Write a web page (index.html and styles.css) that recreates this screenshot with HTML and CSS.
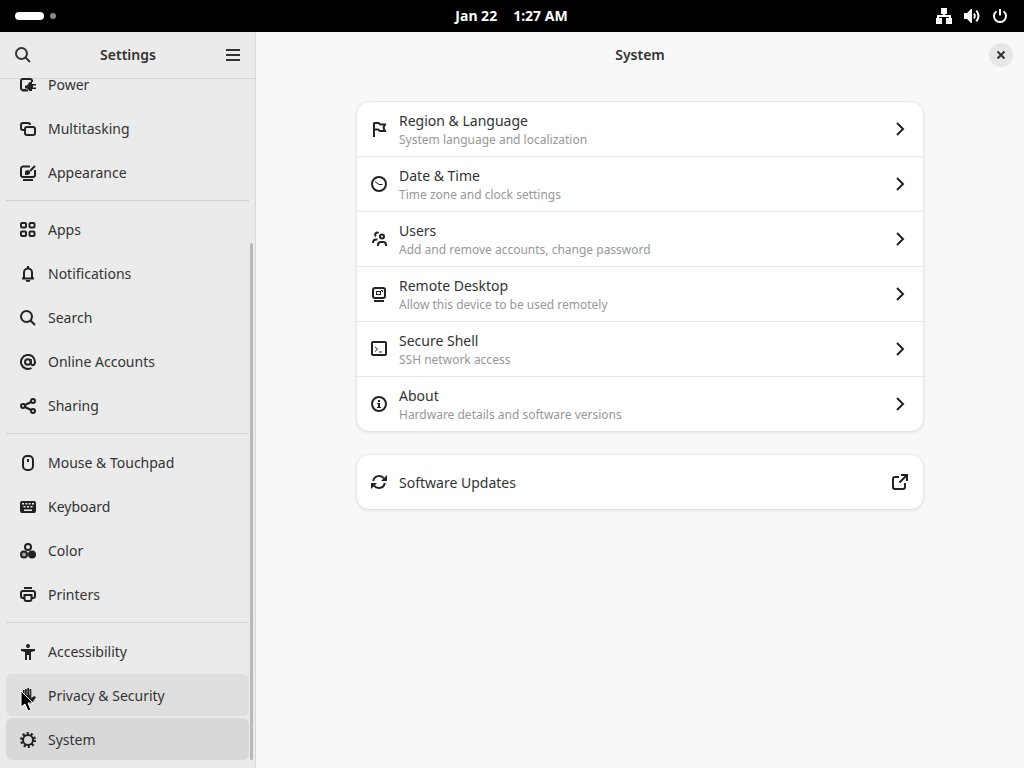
FILE: index.html
```
<!DOCTYPE html>
<html lang="en">
  <head>
    <meta charset="UTF-8" />
    <meta name="viewport" content="width=device-width, initial-scale=1.0" />
    <title>Settings</title>
    <link rel="stylesheet" href="styles.css">
  </head>

  <body>
    <!-- Top bar -->
    <header class="topbar">
      <button class="workspaces" aria-label="Activities"><span class="pill"></span><span class="dot"></span></button>
      <button class="clock"><span>Jan 22</span><span>1:27 AM</span></button>
      <button class="status" aria-label="System menu">
        <svg class="icon" viewBox="0 0 16 16"><path d="M5 0h6v6H9v1h6v3h1v6h-6v-6h3V9H3v1h3v6H0v-6h1V7h6V6H5z"/></svg>
        <svg class="icon" viewBox="0 0 16 16"><path d="M0 5h3l4-4h1v14H7l-4-4H0z"/><g class="line"><path d="M10 5.500q1.600 2.500 0 5M12.300 2.500q4.400 5.500 0 11"/></g></svg>
        <svg class="icon" viewBox="0 0 16 16"><g class="line"><path d="M4.500 3.200a6 6 0 1 0 7 0M8 1v6.500"/></g></svg>
      </button>
    </header>

    <div class="window">
      <!-- Sidebar -->
      <aside class="sidebar">
        <div class="titlebar">
          <button class="flat" aria-label="Search">
            <svg class="icon" viewBox="0 0 16 16"><g class="line"><circle cx="6.500" cy="6.500" r="5.500"/><path d="M10.500 10.500l4.500 4.500"/></g></svg>
          </button>
          <h2>Settings</h2>
          <button class="flat" aria-label="Main menu">
            <svg class="icon" viewBox="0 0 16 16"><path d="M1 2h14v2H1zM1 7h14v2H1zM1 12h14v2H1z"/></svg>
          </button>
        </div>

        <nav class="panels">
          <a href="#power">
            <svg class="icon" viewBox="0 0 16 16"><g class="line"><path d="M6 13H3a2 2 0 0 1-2-2V4a2 2 0 0 1 2-2h7a2 2 0 0 1 2 2v1M2 13.500h6"/></g><path d="M12 5v2h4v1.500h-3v2h3V12h-4v2H9.500L7 11.500H5v-3h2L9.500 5z"/></svg>
            Power
          </a>
          <a href="#multitasking">
            <svg class="icon" viewBox="0 0 16 16"><g class="line"><path d="M4 9H3a2 2 0 0 1-2-2V4a2 2 0 0 1 2-2h5a2 2 0 0 1 2 2"/><rect x="5" y="6" width="10" height="8" rx="2"/></g></svg>
            Multitasking
          </a>
          <a href="#appearance">
            <svg class="icon" viewBox="0 0 16 16"><g class="line"><path d="M10 1.500H3a2 2 0 0 0-2 2V10a2 2 0 0 0 2 2h10a2 2 0 0 0 2-2V5M10 6l5-5"/></g><path d="M5 9.500V7a2.500 2.500 0 0 1 4-1.500l1 1A3 3 0 0 1 7.500 10H5zM3 14h10v2H3z"/></svg>
            Appearance
          </a>
          <hr>
          <a href="#apps">
            <svg class="icon" viewBox="0 0 16 16"><g class="line"><rect x="1" y="1" width="5" height="4.500" rx="1"/><rect x="9.500" y="1" width="5" height="4.500" rx="1"/><rect x="1" y="9.500" width="5" height="4.500" rx="1"/><rect x="9.500" y="9.500" width="5" height="4.500" rx="1"/></g></svg>
            Apps
          </a>
          <a href="#notifications">
            <svg class="icon" viewBox="0 0 16 16"><g class="line"><path d="M4 12V6.500a4 4 0 0 1 8 0V12M2 12.500h12"/></g><path d="M7 0h2v3H7zM5.500 14h5a2.500 2 0 0 1-5 0z"/></svg>
            Notifications
          </a>
          <a href="#search">
            <svg class="icon" viewBox="0 0 16 16"><g class="line"><circle cx="6.500" cy="6.500" r="5.500"/><path d="M10.500 10.500l4.500 4.500"/></g></svg>
            Search
          </a>
          <a href="#accounts">
            <svg class="icon" viewBox="0 0 16 16"><g class="line"><circle cx="7.800" cy="8" r="2.800"/><path d="M10.800 5v4.500q.4 1.700 2 1.700Q15 10.800 15 8a7 7 0 1 0-3.500 6"/></g></svg>
            Online Accounts
          </a>
          <a href="#sharing">
            <svg class="icon" viewBox="0 0 16 16"><g class="line"><circle cx="3" cy="8" r="2"/><circle cx="13" cy="3" r="2"/><circle cx="13" cy="13" r="2"/><path d="M5 7l6-3M5 9l6 3"/></g></svg>
            Sharing
          </a>
          <hr>
          <a href="#mouse">
            <svg class="icon" viewBox="0 0 16 16"><g class="line"><rect x="3" y="1" width="10" height="14" rx="4"/><path d="M8 4v3"/></g></svg>
            Mouse &amp; Touchpad
          </a>
          <a href="#keyboard">
            <svg class="icon" viewBox="0 0 16 16"><path fill-rule="evenodd" d="M2 2h12a2 2 0 0 1 2 2v8a2 2 0 0 1-2 2H2a2 2 0 0 1-2-2V4a2 2 0 0 1 2-2zm0 2v1.500h2V4zm3.300 0v1.500h2V4zm3.300 0v1.500h2V4zM12 4v1.500h2V4zM3.500 7v1.500h2V7zM7 7v1.500h2V7zm3.500 0v1.500h2V7zM4 10.500V12h8v-1.500z"/></svg>
            Keyboard
          </a>
          <a href="#color">
            <svg class="icon" viewBox="0 0 16 16"><g class="line"><circle cx="8" cy="4" r="3"/><circle class="tint" cx="4" cy="11.500" r="3"/></g><circle cx="12" cy="11.500" r="4"/></svg>
            Color
          </a>
          <a href="#printers">
            <svg class="icon" viewBox="0 0 16 16"><path d="M4 0h8v2H4z"/><g class="line"><path d="M4 11H3a2 2 0 0 1-2-2V6a2 2 0 0 1 2-2h10a2 2 0 0 1 2 2v3a2 2 0 0 1-2 2h-1"/><path d="M4.500 8h7v4a2 2 0 0 1-2 2h-3a2 2 0 0 1-2-2z"/></g></svg>
            Printers
          </a>
          <hr>
          <a href="#accessibility">
            <svg class="icon" viewBox="0 0 16 16"><circle cx="8" cy="2" r="2"/><path d="M1 5h14v2l-4 1v8H9v-5H7v5H5V8L1 7z"/></svg>
            Accessibility
          </a>
          <a href="#privacy" class="hovered">
            <svg class="icon" viewBox="0 0 16 16"><path d="M3 2h1.500v6H5V1h1.700v6h.6V0H9v7h.6V1h1.700v9l3-2 1.700 1.200L12 15l-3 1H6l-3-2-1-4z"/></svg>
            Privacy &amp; Security
          </a>
          <a href="#system" class="selected" aria-current="page">
            <svg class="icon" viewBox="0 0 16 16"><g class="line"><circle cx="8" cy="8" r="5"/><circle class="teeth" cx="8" cy="8" r="6.500"/></g></svg>
            System
          </a>
        </nav>
        <div class="scrollbar"></div>
      </aside>

      <!-- System panel -->
      <main class="content">
        <div class="titlebar">
          <h1>System</h1>
          <button class="close" aria-label="Close">
            <svg class="icon" viewBox="0 0 16 16"><g class="line"><path d="M4.500 4.500l7 7M11.500 4.500l-7 7"/></g></svg>
          </button>
        </div>

        <div class="groups">
          <div class="card">
            <a class="row" href="#region">
              <svg class="icon" viewBox="0 0 16 16"><g class="line"><path d="M3 16V1.500M3 2h4q1 0 1.500.8T10 3.500h4l-1.500 3.300L14 10H9.500Q8.500 10 8 9.200T6.500 8.500H3"/></g></svg>
              <span class="text"><span class="name">Region &amp; Language</span><span class="hint">System language and localization</span></span>
              <svg class="icon" viewBox="0 0 16 16"><g class="line"><path d="M5 2l6 6-6 6"/></g></svg>
            </a>
            <a class="row" href="#datetime">
              <svg class="icon" viewBox="0 0 16 16"><g class="line"><circle cx="8" cy="8" r="7"/></g><g class="thin"><path d="M4 5.500L8 8.500h3.500"/></g></svg>
              <span class="text"><span class="name">Date &amp; Time</span><span class="hint">Time zone and clock settings</span></span>
              <svg class="icon" viewBox="0 0 16 16"><g class="line"><path d="M5 2l6 6-6 6"/></g></svg>
            </a>
            <a class="row" href="#users">
              <svg class="icon" viewBox="0 0 16 16"><g class="line"><circle cx="11" cy="5.500" r="2"/><path d="M7 15v-1a3 3 0 0 1 3-3h2a3 3 0 0 1 3 3v1M7.500 2A2 2 0 1 0 5 5.300M2 12v-1a3 3 0 0 1 3-2.500h1.500"/></g></svg>
              <span class="text"><span class="name">Users</span><span class="hint">Add and remove accounts, change password</span></span>
              <svg class="icon" viewBox="0 0 16 16"><g class="line"><path d="M5 2l6 6-6 6"/></g></svg>
            </a>
            <a class="row" href="#remote">
              <svg class="icon" viewBox="0 0 16 16"><g class="line"><rect x="2" y="2" width="12" height="10" rx="2"/><path d="M3 15h10"/></g><g class="thin"><rect x="5.500" y="5.500" width="4" height="3"/><path d="M10 4.500h1.500V6"/></g></svg>
              <span class="text"><span class="name">Remote Desktop</span><span class="hint">Allow this device to be used remotely</span></span>
              <svg class="icon" viewBox="0 0 16 16"><g class="line"><path d="M5 2l6 6-6 6"/></g></svg>
            </a>
            <a class="row" href="#ssh">
              <svg class="icon" viewBox="0 0 16 16"><g class="line"><rect x="1" y="1" width="14" height="13" rx="1"/></g><g class="thin"><path d="M4 6l2.500 2.200L4 10.500M8 11h3"/></g></svg>
              <span class="text"><span class="name">Secure Shell</span><span class="hint">SSH network access</span></span>
              <svg class="icon" viewBox="0 0 16 16"><g class="line"><path d="M5 2l6 6-6 6"/></g></svg>
            </a>
            <a class="row" href="#about">
              <svg class="icon" viewBox="0 0 16 16"><g class="line"><circle cx="8" cy="8" r="7"/></g><path d="M7 4h2v2H7zM6 7h3v4h1v1H6v-1h1V8H6z"/></svg>
              <span class="text"><span class="name">About</span><span class="hint">Hardware details and software versions</span></span>
              <svg class="icon" viewBox="0 0 16 16"><g class="line"><path d="M5 2l6 6-6 6"/></g></svg>
            </a>
          </div>

          <div class="card">
            <a class="row" href="#updates">
              <svg class="icon" viewBox="0 0 16 16"><g class="line"><path d="M2.200 7A6 6 0 0 1 13 4.500M13.800 9A6 6 0 0 1 3 11.500"/></g><path d="M16 1v6h-6zM0 15V9h6z"/></svg>
              <span class="text"><span class="name">Software Updates</span></span>
              <svg class="icon" viewBox="0 0 16 16"><g class="line"><path d="M7 3H3a2 2 0 0 0-2 2v8a2 2 0 0 0 2 2h8a2 2 0 0 0 2-2V9M7.500 8.500L14 2M9 1h6v6"/></g></svg>
            </a>
          </div>
        </div>
      </main>
    </div>

    <!-- Mouse pointer -->
    <svg class="pointer" viewBox="0 0 14 22"><path d="M1 1v16l4-3 3 7 3-1-3-7h5z"/></svg>
  </body>
</html>
```
FILE: styles.css
```
* {
  margin: 0;
  padding: 0;
  box-sizing: border-box;
}

body {
  height: 100vh;
  display: flex;
  flex-direction: column;
  overflow: hidden;
  font-family: "Noto Sans", sans-serif;
  font-size: 14px;
  line-height: 20px;
  color: #333;
  background-color: #f8f8f8;
}

a {
  color: inherit;
  text-decoration: none;
}

button {
  border: none;
  background: none;
  color: inherit;
  font: inherit;
}

/* Icons */
.icon {
  width: 16px;
  height: 16px;
  flex: none;
  fill: currentColor;
}

.panels .icon,
.row .icon {
  color: #222;
}

.line,
.thin {
  fill: none;
  stroke: currentColor;
  stroke-width: 2;
}

.thin {
  stroke-width: 1;
}

.tint {
  fill: #aaa;
}

.teeth {
  stroke-width: 3;
  stroke-dasharray: 2 2.08;
}

/* Top bar */
.topbar {
  height: 32px;
  flex: none;
  display: grid;
  grid-template-columns: 1fr auto 1fr;
  align-items: center;
  padding: 0 16px 0 15px;
  background-color: #000;
  color: #fff;
  font-weight: 700;
}

.workspaces {
  justify-self: start;
  display: flex;
  align-items: center;
  gap: 6px;
}

.pill {
  width: 29px;
  height: 8px;
  border-radius: 4px;
  background-color: #fff;
}

.dot {
  width: 6px;
  height: 6px;
  border-radius: 50%;
  background-color: #888;
}

.clock {
  display: flex;
  gap: 16px;
}

.status {
  justify-self: end;
  display: flex;
  gap: 12px;
}

/* Window */
.window {
  flex: 1;
  min-height: 0;
  display: flex;
}

.titlebar {
  height: 46px;
  flex: none;
  display: grid;
  grid-template-columns: 32px 1fr 32px;
  align-items: center;
  padding: 0 7px;
}

.titlebar h1,
.titlebar h2 {
  grid-column: 2;
  text-align: center;
  font-size: 14px;
  font-weight: 600;
}

.flat,
.close {
  display: flex;
  align-items: center;
  justify-content: center;
  height: 32px;
}

.close {
  width: 24px;
  height: 24px;
  justify-self: center;
  border-radius: 50%;
  background-color: #e7e7e7;
}

/* Sidebar */
.sidebar {
  position: relative;
  width: 256px;
  flex: none;
  display: flex;
  flex-direction: column;
  background-color: #ebebeb;
  border-right: 1px solid #d8d8d8;
}

.sidebar .titlebar {
  padding-right: 6px;
  box-shadow: 0 1px #d6d6d6;
}

.panels {
  flex: 1;
  min-height: 0;
  display: flex;
  flex-direction: column;
  justify-content: flex-end;
  gap: 2px;
  padding: 0 6px 8px;
  overflow: hidden;
}

.panels a {
  height: 42px;
  flex: none;
  display: flex;
  align-items: center;
  gap: 12px;
  padding: 1px 14px 0;
  border-radius: 6px;
  line-height: 14px;
}

.panels hr {
  flex: none;
  border: none;
  border-top: 1px solid #d0d0d0;
  margin: 5px 0;
}

.panels .hovered {
  background-color: #dedede;
}

.panels .selected {
  background-color: #d8d8d8;
}

.scrollbar {
  position: absolute;
  top: 211px;
  right: 2px;
  bottom: 8px;
  width: 3px;
  border-radius: 2px;
  background-color: #b9b9b9;
}

/* System panel */
.content {
  flex: 1;
  min-width: 0;
}

.groups {
  max-width: 590px;
  margin: 0 auto;
  padding: 24px 12px;
  display: flex;
  flex-direction: column;
  gap: 24px;
}

.card {
  border-radius: 12px;
  background-color: #fff;
  box-shadow: 0 0 0 1px rgba(0, 0, 0, 0.03), 0 1px 3px 1px rgba(0, 0, 0, 0.07);
}

.row {
  height: 54px;
  display: flex;
  align-items: center;
  gap: 12px;
  padding: 0 15px 0 14px;
}

.row + .row {
  height: 55px;
  border-top: 1px solid #e8e8e8;
}

.text {
  flex: 1;
  display: flex;
  flex-direction: column;
  padding-top: 2px;
}

.hint {
  font-size: 12px;
  line-height: 18px;
  color: #979797;
}

.pointer {
  position: absolute;
  left: 20px;
  top: 690px;
  width: 14px;
  height: 22px;
  fill: #000;
  stroke: #fff;
}
```
